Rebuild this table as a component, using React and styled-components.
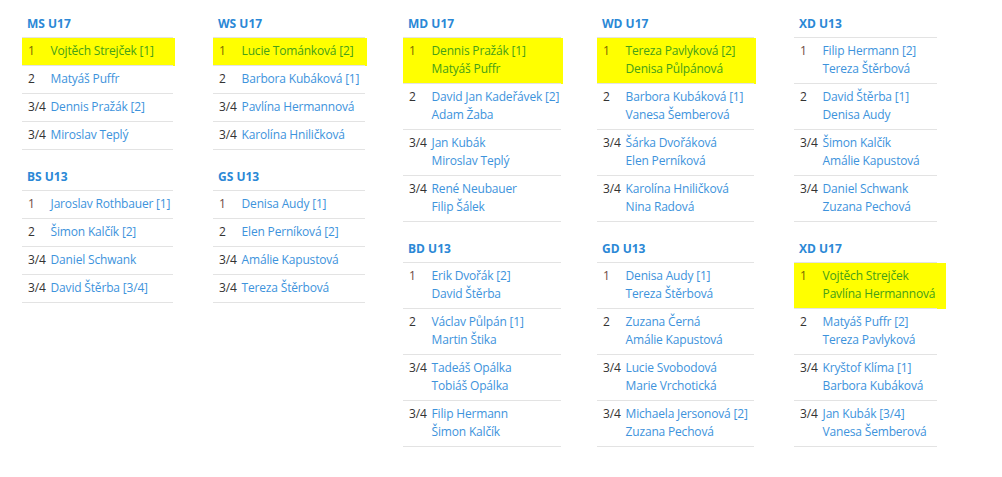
import React from "react";
import styled, { createGlobalStyle } from "styled-components";

const GlobalStyle = createGlobalStyle`
  html, body {
    margin: 0;
    padding: 0;
    background: #fff;
  }
  body {
    font-family: "Open Sans", "Noto Sans", sans-serif;
    font-size: 12px;
    line-height: 18px;
    letter-spacing: -0.18px;
    color: #333;
  }
`;

const Page = styled.div`
  display: grid;
  grid-template-columns: 191px 190px 194px 197px 143px;
  align-items: start;
  padding: 15px 0 0 22px;
`;

const Column = styled.div`
  display: flex;
  flex-direction: column;
  gap: 18px;
`;

const Title = styled.div`
  font-weight: 700;
  color: #2b88d6;
  padding: 0 5px;
  margin-bottom: 4px;
  white-space: nowrap;
  letter-spacing: 0;
`;

const Table = styled.table`
  border-collapse: collapse;
  width: ${(p) => p.$w}px;
  border-bottom: 1px solid #e3e3e3;
`;

const Row = styled.tr`
  border-top: 1px solid #e3e3e3;
  background: ${(p) => (p.$hl ? "#ffff00" : "transparent")};
`;

const Place = styled.td`
  vertical-align: top;
  padding: 4px 5px 5px 6px;
  white-space: nowrap;
  width: 1px;
  color: ${(p) => (p.$hl ? "#7a6a00" : p.$first ? "#6e4a44" : "#333")};
`;

const Names = styled.td`
  vertical-align: top;
  padding: 4px 2px 5px 0;
  white-space: nowrap;
  box-shadow: ${(p) => (p.$hl ? `${p.$ext}px 0 0 #ffff00` : "none")};
`;

const Name = styled.div`
  color: ${(p) => (p.$hl ? "#45a019" : "#3d93dc")};
`;

const columns = [
  {
    w: 151,
    sections: [
      {
        title: "MS U17",
        hl: 2,
        rows: [
          ["1", ["Vojtěch Strejček [1]"]],
          ["2", ["Matyáš Puffr"]],
          ["3/4", ["Dennis Pražák [2]"]],
          ["3/4", ["Miroslav Teplý"]],
        ],
      },
      {
        title: "BS U13",
        rows: [
          ["1", ["Jaroslav Rothbauer [1]"]],
          ["2", ["Šimon Kalčík [2]"]],
          ["3/4", ["Daniel Schwank"]],
          ["3/4", ["David Štěrba [3/4]"]],
        ],
      },
    ],
  },
  {
    w: 152,
    sections: [
      {
        title: "WS U17",
        hl: 2,
        rows: [
          ["1", ["Lucie Tománková [2]"]],
          ["2", ["Barbora Kubáková [1]"]],
          ["3/4", ["Pavlína Hermannová"]],
          ["3/4", ["Karolína Hniličková"]],
        ],
      },
      {
        title: "GS U13",
        rows: [
          ["1", ["Denisa Audy [1]"]],
          ["2", ["Elen Perníková [2]"]],
          ["3/4", ["Amálie Kapustová"]],
          ["3/4", ["Tereza Štěrbová"]],
        ],
      },
    ],
  },
  {
    w: 158,
    sections: [
      {
        title: "MD U17",
        hl: 2,
        rows: [
          ["1", ["Dennis Pražák [1]", "Matyáš Puffr"]],
          ["2", ["David Jan Kadeřávek [2]", "Adam Žaba"]],
          ["3/4", ["Jan Kubák", "Miroslav Teplý"]],
          ["3/4", ["René Neubauer", "Filip Šálek"]],
        ],
      },
      {
        title: "BD U13",
        rows: [
          ["1", ["Erik Dvořák [2]", "David Štěrba"]],
          ["2", ["Václav Půlpán [1]", "Martin Štika"]],
          ["3/4", ["Tadeáš Opálka", "Tobiáš Opálka"]],
          ["3/4", ["Filip Hermann", "Šimon Kalčík"]],
        ],
      },
    ],
  },
  {
    w: 157,
    sections: [
      {
        title: "WD U17",
        hl: 2,
        rows: [
          ["1", ["Tereza Pavlyková [2]", "Denisa Půlpánová"]],
          ["2", ["Barbora Kubáková [1]", "Vanesa Šemberová"]],
          ["3/4", ["Šárka Dvořáková", "Elen Perníková"]],
          ["3/4", ["Karolína Hniličková", "Nina Radová"]],
        ],
      },
      {
        title: "GD U13",
        rows: [
          ["1", ["Denisa Audy [1]", "Tereza Štěrbová"]],
          ["2", ["Zuzana Černá", "Amálie Kapustová"]],
          ["3/4", ["Lucie Svobodová", "Marie Vrchotická"]],
          ["3/4", ["Michaela Jersonová [2]", "Zuzana Pechová"]],
        ],
      },
    ],
  },
  {
    w: 143,
    sections: [
      {
        title: "XD U13",
        rows: [
          ["1", ["Filip Hermann [2]", "Tereza Štěrbová"]],
          ["2", ["David Štěrba [1]", "Denisa Audy"]],
          ["3/4", ["Šimon Kalčík", "Amálie Kapustová"]],
          ["3/4", ["Daniel Schwank", "Zuzana Pechová"]],
        ],
      },
      {
        title: "XD U17",
        hl: 9,
        rows: [
          ["1", ["Vojtěch Strejček", "Pavlína Hermannová"]],
          ["2", ["Matyáš Puffr [2]", "Tereza Pavlyková"]],
          ["3/4", ["Kryštof Klíma [1]", "Barbora Kubáková"]],
          ["3/4", ["Jan Kubák [3/4]", "Vanesa Šemberová"]],
        ],
      },
    ],
  },
];

function Results({ section, w }) {
  return (
    <div>
      <Title>{section.title}</Title>
      <Table $w={w}>
        <tbody>
          {section.rows.map(([place, names], i) => {
            const hl = i === 0 && !!section.hl;
            return (
              <Row key={i} $hl={hl}>
                <Place $hl={hl} $first={place === "1"}>
                  {place}
                </Place>
                <Names $hl={hl} $ext={section.hl || 0}>
                  {names.map((n) => (
                    <Name key={n} $hl={hl}>
                      {n}
                    </Name>
                  ))}
                </Names>
              </Row>
            );
          })}
        </tbody>
      </Table>
    </div>
  );
}

export default function App() {
  return (
    <>
      <GlobalStyle />
      <Page>
        {columns.map((col, i) => (
          <Column key={i}>
            {col.sections.map((s) => (
              <Results key={s.title} section={s} w={col.w} />
            ))}
          </Column>
        ))}
      </Page>
    </>
  );
}
